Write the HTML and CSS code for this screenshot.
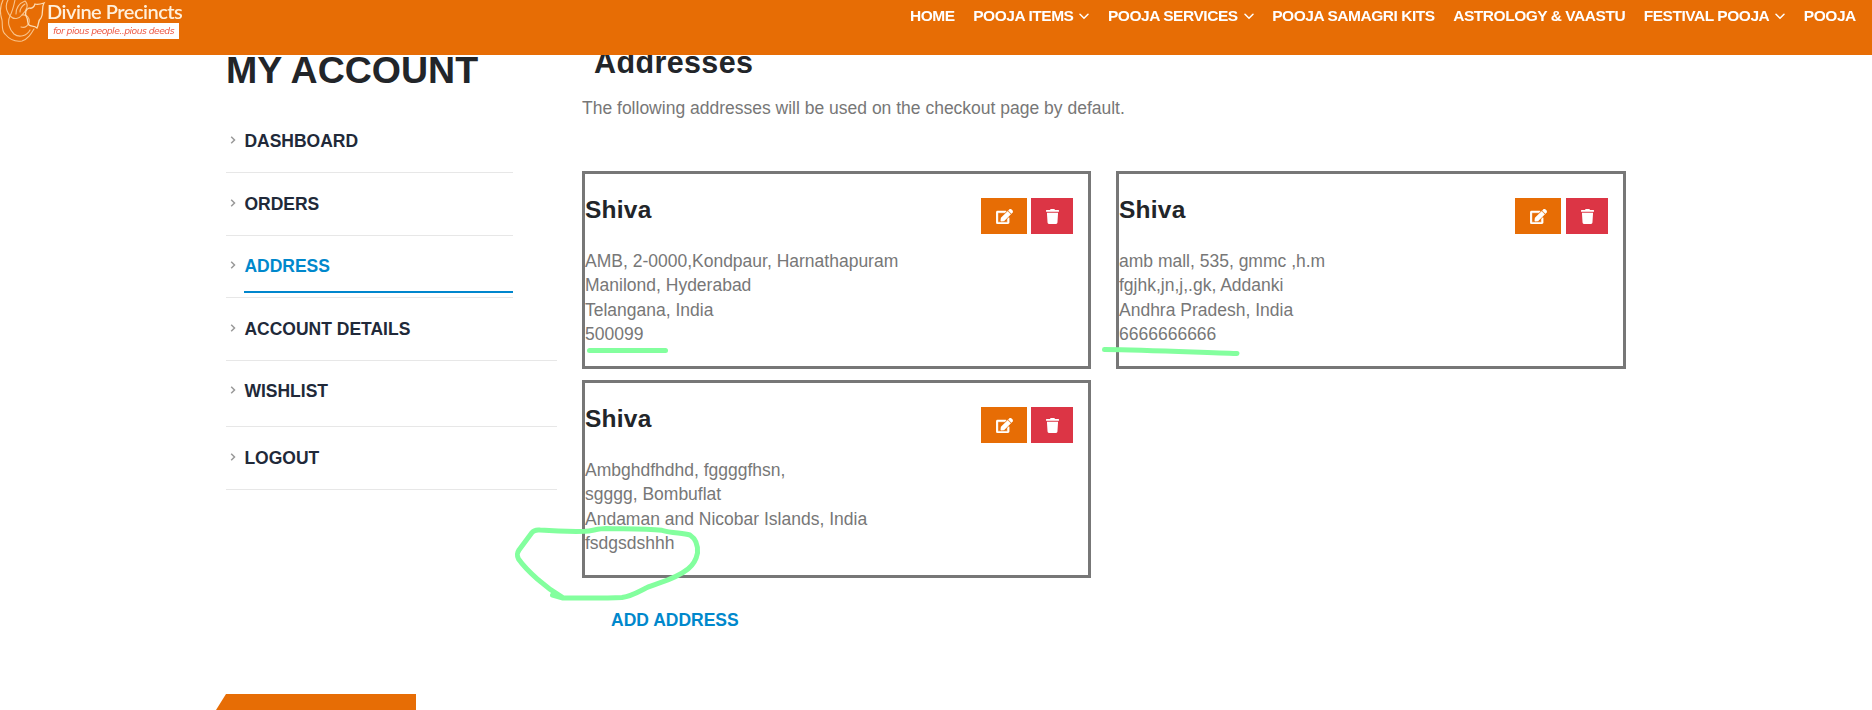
FILE: index.html
```html
<!DOCTYPE html>
<html lang="en">
<head>
<meta charset="utf-8">
<title>My Account - Divine Precincts</title>
<link rel="stylesheet" href="styles.css">
</head>
<body>
<svg class="sprite" width="0" height="0">
  <symbol id="down" viewBox="0 0 10 7"><path d="M1 1.2 5 5.2 9 1.2" fill="none" stroke="currentColor" stroke-width="1.5" stroke-linecap="round"/></symbol>
  <symbol id="right" viewBox="0 0 6 8"><path d="M1.2 .7 4.5 4 1.2 7.3" fill="none" stroke="currentColor" stroke-width="1.5"/></symbol>
  <symbol id="edit" viewBox="0 0 576 512"><path fill="currentColor" stroke="currentColor" stroke-width="14" d="M402.6 83.2l90.2 90.2c3.8 3.8 3.8 10 0 13.8L274.4 405.6l-92.8 10.3c-12.4 1.4-22.9-9.1-21.5-21.5l10.3-92.8L388.8 83.2c3.8-3.8 10-3.8 13.8 0zm162-22.9l-48.8-48.8c-15.2-15.2-39.9-15.2-55.2 0l-35.4 35.4c-3.8 3.8-3.8 10 0 13.8l90.2 90.2c3.8 3.8 10 3.8 13.8 0l35.4-35.4c15.2-15.3 15.2-40 0-55.2zM384 346.2V448H64V128h229.8c3.2 0 6.2-1.3 8.5-3.5l40-40c7.6-7.6 2.2-20.5-8.5-20.5H48C21.5 64 0 85.500 0 112v352c0 26.500 21.500 48 48 48h352c26.500 0 48-21.500 48-48V306.200c0-10.700-12.900-16-20.500-8.500l-40 40c-2.200 2.300-3.500 5.300-3.500 8.500z"/></symbol>
  <symbol id="trash" viewBox="0 0 448 512"><path fill="currentColor" d="M432 32H312l-9.400-18.700A24 24 0 0 0 281.100 0H166.800a23.720 23.720 0 0 0-21.400 13.300L136 32H16A16 16 0 0 0 0 48v32a16 16 0 0 0 16 16h416a16 16 0 0 0 16-16V48a16 16 0 0 0-16-16zM53.200 467a48 48 0 0 0 47.900 45h245.800a48 48 0 0 0 47.900-45L416 128H32z"/></symbol>
</svg>

<header class="header">
  <a class="brand">
    <svg class="brand-mark" width="46" height="42" viewBox="0 0 46 42" fill="none" stroke="#f9c48c" stroke-width="1.1" stroke-linecap="round">
      <path d="M3 0C0 6 0 14 2 20 3 26 1 30 5 34 10 40 16 42 22 41 28 39 31 34 34 29"/>
      <path d="M8 0C4 7 7 12 10 16 7 22 9 29 14 34 19 38 27 36 30 30"/>
      <path d="M10 16C13 10 14 5 15 0M10 16C14 20 19 19 22 15 27 14 30 18 29 23 27 27 24 28 21 27"/>
      <path d="M16 14C16 7 20 3 25 1 29 5 27 10 22 15M20 12C20 8 22 6 25 4"/>
      <path d="M27 18C24 13 26 9 29 8 32 9 34 7 35 4 38 5 41 4 44 3 41 8 44 13 41 18 38 20 39 24 37 28 34 25 31 27 29 25 27 23 28 20 27 18Z" stroke="#fddcb4" stroke-width="1.3"/>
    </svg>
    <span class="brand-text">
      <span class="brand-name">Divine Precincts</span>
      <span class="brand-tag">for pious people..pious deeds</span>
    </span>
  </a>
  <nav class="menu">
    <a>HOME</a>
    <a>POOJA ITEMS<svg class="down"><use href="#down"/></svg></a>
    <a>POOJA SERVICES<svg class="down"><use href="#down"/></svg></a>
    <a>POOJA SAMAGRI KITS</a>
    <a>ASTROLOGY &amp; VAASTU</a>
    <a>FESTIVAL POOJA<svg class="down"><use href="#down"/></svg></a>
    <a>POOJA</a>
  </nav>
</header>

<main class="page">
  <aside class="sidebar">
    <h2 class="side-title">MY ACCOUNT</h2>
    <ul class="side-list">
      <li class="side-item short"><svg class="right"><use href="#right"/></svg><a>DASHBOARD</a></li>
      <li class="side-item short"><svg class="right"><use href="#right"/></svg><a>ORDERS</a></li>
      <li class="side-item short active"><svg class="right"><use href="#right"/></svg><a>ADDRESS</a></li>
      <li class="side-item"><svg class="right"><use href="#right"/></svg><a>ACCOUNT DETAILS</a></li>
      <li class="side-item tall"><svg class="right"><use href="#right"/></svg><a>WISHLIST</a></li>
      <li class="side-item"><svg class="right"><use href="#right"/></svg><a>LOGOUT</a></li>
    </ul>
  </aside>
  <section class="content">
    <h3 class="content-title">Addresses</h3>
    <p class="intro">The following addresses will be used on the checkout page by default.</p>
    <div class="cards">
      <article class="card">
        <div class="card-head"><h4 class="name">Shiva</h4><div class="actions"><a class="btn edit"><svg class="i-edit"><use href="#edit"/></svg></a><a class="btn delete"><svg class="i-trash"><use href="#trash"/></svg></a></div></div>
        <p class="lines">AMB, 2-0000,Kondpaur, Harnathapuram<br>Manilond, Hyderabad<br>Telangana, India<br>500099</p>
      </article>
      <article class="card">
        <div class="card-head"><h4 class="name">Shiva</h4><div class="actions"><a class="btn edit"><svg class="i-edit"><use href="#edit"/></svg></a><a class="btn delete"><svg class="i-trash"><use href="#trash"/></svg></a></div></div>
        <p class="lines">amb mall, 535, gmmc ,h.m<br>fgjhk,jn,j,.gk, Addanki<br>Andhra Pradesh, India<br>6666666666</p>
      </article>
      <article class="card">
        <div class="card-head"><h4 class="name">Shiva</h4><div class="actions"><a class="btn edit"><svg class="i-edit"><use href="#edit"/></svg></a><a class="btn delete"><svg class="i-trash"><use href="#trash"/></svg></a></div></div>
        <p class="lines">Ambghdfhdhd, fggggfhsn,<br>sgggg, Bombuflat<br>Andaman and Nicobar Islands, India<br>fsdgsdshhh</p>
      </article>
    </div>
    <a class="add">ADD ADDRESS</a>
  </section>
</main>
<footer class="footer"><div class="ribbon"></div></footer>

<svg class="marker" width="1872" height="710" viewBox="0 0 1872 710">
  <path d="M589.500 350.500H665.500"/>
  <path d="M1104.500 349.500C1150 350 1200 352.500 1237 353.500"/>
  <path d="M552.500 595 562.500 597.500C545 587 527 571 518.500 559 516.500 555 517 553 519 550L532 532.500C534 530 536 529.500 540 530 560 531.500 575 531.500 585 531.300 592 531 598 528.500 606 528.500 625 529 645 528.500 662 530.300 672 533 682 533 690 535 696 539 698 546 697.500 553 696 561 693 565 688 569 674 580 660 582 646 588 638 592 632 596 622 597.500 602 598.500 582 598 563 598L552.500 595"/>
</svg>
</body>
</html>
```
FILE: styles.css
```css
* { box-sizing: border-box; margin: 0; padding: 0; }
body {
  width: 1872px;
  height: 710px;
  overflow: hidden;
  display: flex;
  flex-direction: column;
  position: relative;
  background: #fff;
  color: #777;
  font: 17.5px/24.5px "Liberation Sans", Arial, sans-serif;
}
.sprite { position: absolute; }
.header {
  position: fixed;
  top: 0;
  left: 0;
  right: 0;
  z-index: 5;
  height: 55px;
  display: flex;
  justify-content: space-between;
  align-items: flex-start;
  background: #e76d05;
}
.brand { display: flex; }
.brand-mark { display: block; flex: none; }
.brand-text { display: flex; flex-direction: column; padding-left: 1px; }
.brand-name {
  height: 23px;
  font: 600 20px/23px Lato, sans-serif;
  letter-spacing: -.5px;
  color: #fff0dc;
  white-space: nowrap;
}
.brand-tag {
  margin-left: 1px;
  width: 131px;
  height: 16px;
  background: #fff;
  color: #ee5b48;
  text-align: center;
  font: italic 9.2px/15px "DejaVu Sans", sans-serif;
  letter-spacing: -.5px;
  white-space: nowrap;
}
.menu {
  width: 962px;
  display: flex;
  gap: 18.5px;
  padding-top: 5px;
  color: #fff;
  font-size: 15.5px;
  font-weight: 700;
  line-height: 21px;
  letter-spacing: -.46px;
  white-space: nowrap;
}
.menu a { display: flex; align-items: center; }
.down { width: 10px; height: 7px; margin-left: 6px; margin-top: 1px; }
.page { display: flex; gap: 25px; padding-left: 226px; height: 694px; flex: none; }
.sidebar { width: 331px; padding-top: 50px; flex: none; }
.side-title { color: #222529; font-size: 37.5px; line-height: 40px; margin-bottom: 20px; white-space: nowrap; }
.side-list { list-style: none; }
.side-item {
  display: flex;
  align-items: flex-start;
  height: 63px;
  padding: 19px 0 0 4px;
  border-bottom: 1px solid #e7e7e7;
  color: #212939;
  font-weight: 700;
}
.side-item.short { width: 287px; }
.side-item.tall { height: 66px; padding-top: 18px; }
.side-item a { flex: 1; }
.right { width: 6px; height: 8px; margin: 7px 8.4px 0 0; color: #999; }
.side-item.active { height: 62px; padding-top: 18px; }
.active a { height: 39px; color: #08c; border-bottom: 2px solid #0086cd; }
.content { width: 1044px; padding-top: 43px; }
.content-title { padding-left: 12px; color: #222529; font-size: 30.5px; line-height: 38px; letter-spacing: .38px; }
.intro { margin-top: 15px; }
.cards { display: grid; grid-template-columns: 509px 510px; gap: 11px 25px; margin-top: 50.5px; }
.card { height: 198px; border: 3px solid #777; padding-top: 24px; }
.card-head { display: flex; justify-content: space-between; padding-right: 15px; height: 50.5px; }
.card:nth-child(2) .actions { gap: 5px; }
.name { color: #222529; font-size: 24.5px; line-height: 24px; letter-spacing: .25px; }
.actions { display: flex; gap: 4px; }
.btn { display: flex; align-items: center; justify-content: center; height: 36px; color: #fff; }
.edit { width: 46px; background: #e76d05; }
.delete { width: 42px; background: #dc3545; }
.i-edit { width: 17px; height: 15px; }
.i-trash { width: 13px; height: 15px; }
.add { display: block; margin: 30px 0 0 29px; color: #08c; font-weight: 700; }
.footer { padding-left: 216px; }
.ribbon { width: 200px; height: 16px; background: #e76d05; clip-path: polygon(10px 0, 100% 0, 100% 100%, 0 100%); }
.marker {
  position: absolute;
  top: 0;
  left: 0;
  z-index: 6;
  fill: none;
  stroke: #83ff9e;
  stroke-width: 5;
  stroke-linecap: round;
  stroke-linejoin: round;
}
```
